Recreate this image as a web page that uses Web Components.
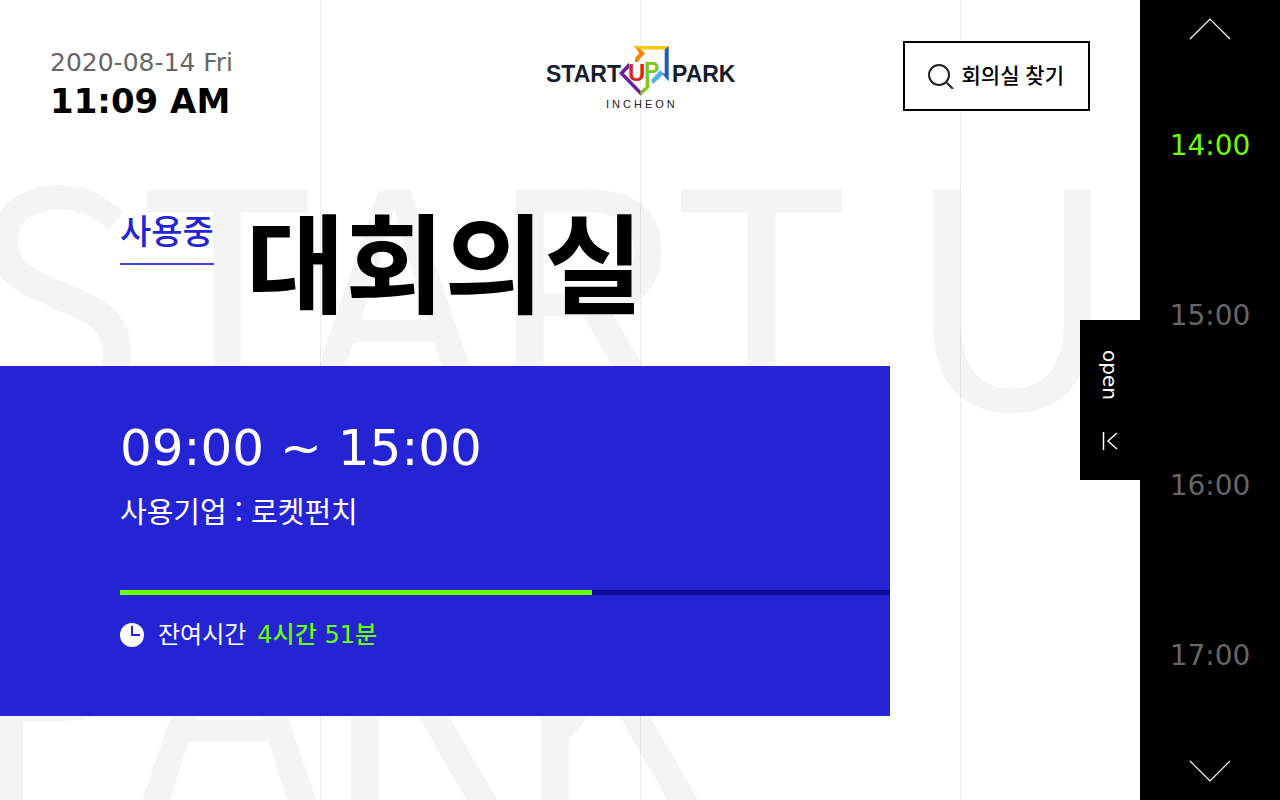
<!DOCTYPE html>
<html lang="ko">
<head>
<meta charset="utf-8">
<meta name="viewport" content="width=device-width, initial-scale=1">
<title>회의실 현황</title>
<style>
  html, body { margin: 0; min-height: 100%; }
  body {
    --blue: #2524d4;
    --lime: #6cff00;
    font-family: "DejaVu Sans", "Noto Sans CJK KR", sans-serif;
    color: #000;
    background: #fff;
  }
</style>
</head>
<body>
<room-app></room-app>
<script>
const define = (name, html) => {
  const template = document.createElement('template');
  template.innerHTML = html;
  customElements.define(name, class extends HTMLElement {
    constructor() {
      super();
      this.attachShadow({ mode: 'open' }).append(template.content.cloneNode(true));
    }
  });
};

define('page-backdrop', `
  <style>
    :host {
      display: block; position: absolute; inset: 0; z-index: -1; overflow: hidden;
      font: 400 300px/400px "Noto Sans CJK KR", sans-serif;
      color: #f4f4f4; white-space: nowrap;
    }
    .words { position: absolute; left: -35px; top: 78px; }
    .line { display: flex; gap: 52px; }
    .rules { position: absolute; inset: 0; display: grid; grid-template-columns: repeat(4, 1fr); }
    .rules i + i { border-left: 1px solid rgba(0, 0, 0, .08); }
  </style>
  <div class="words" aria-hidden="true">
    <div class="line"><span>START</span><span>UP</span></div>
    <div class="line"><span>PARK</span></div>
  </div>
  <div class="rules"><i></i><i></i><i></i><i></i></div>`);

define('date-clock', `
  <style>
    :host { display: block; }
    .date { font-size: 25px; line-height: 32px; color: #666; }
    .time { font-size: 34px; line-height: 44px; font-weight: 700; }
  </style>
  <div class="date"><slot name="date"></slot></div>
  <div class="time"><slot name="time"></slot></div>`);

define('park-logo', `
  <style>
    :host { display: block; }
    svg { display: block; overflow: visible; }
    text { font-family: "Liberation Sans", sans-serif; }
  </style>
  <svg width="188" height="68" viewBox="546 41 188 68" role="img" aria-label="Startup Park Incheon">
    <path d="M633 46h36l-4 3.500h-28z" fill="#ffc800"/>
    <path d="M668.700 46v35.500l-8.200-10 4.200 2.500V49.500z" fill="#1f5fae"/>
    <path d="M651 80l9.500-10 3 4.500-10.500 9.500z" fill="#55b4e6"/>
    <path d="M636 48l5 1.500 4 4-5 5-2 3.500h-3.200l.5-4.500 4-4z" fill="#ff7f00"/>
    <path d="M628.700 62.700L619 73.300l21.700 22.400v-5L623.900 73.300l5.500-5.500z" fill="#6a1f9c"/>
    <path d="M645.700 78h3.500v9.500l-8.500 8.200v-5l5-4.200z" fill="#7ec81e"/>
    <g font-weight="700" font-size="23" fill="#16202b">
      <text x="546" y="82">START</text>
      <text x="672" y="82">PARK</text>
    </g>
    <g font-weight="700">
      <text x="628" y="81" font-size="24" fill="#d8281e">U</text>
      <text x="644" y="79" font-size="23" fill="#7ec81e">P</text>
    </g>
    <text x="606" y="108" font-size="11" letter-spacing="3" fill="#222">INCHEON</text>
  </svg>`);

define('search-button', `
  <style>
    :host { display: block; }
    button {
      display: flex; align-items: center; gap: 8px; box-sizing: border-box; height: 70px;
      margin: 0; padding: 0 24px 0 23px; border: 2px solid #000; border-radius: 0; background: #fff;
      color: #000; font: 500 21px/32px "Noto Sans CJK KR", sans-serif; cursor: pointer;
    }
    span { padding-bottom: 4px; }
  </style>
  <button type="button">
    <svg width="26" height="26" viewBox="0 0 26 26" fill="none" stroke="#222" stroke-width="2" aria-hidden="true">
      <circle cx="11" cy="12" r="10"/><path d="M18 19l7 7"/>
    </svg>
    <span><slot></slot></span>
  </button>`);

define('room-title', `
  <style>
    :host { display: flex; align-items: flex-start; gap: 32px; padding-left: 120px; }
    .state {
      margin-top: 12px; padding-bottom: 9px; border-bottom: 2px solid #4443d8;
      color: var(--blue); font: 500 34px/48px "Noto Sans CJK KR", sans-serif;
    }
    h1 { margin: 0; font: 700 108px/128px "Noto Sans CJK KR", sans-serif; }
  </style>
  <div class="state"><slot name="state"></slot></div>
  <h1><slot></slot></h1>`);

define('booking-panel', `
  <style>
    :host {
      display: block; box-sizing: border-box; min-height: 350px; margin-right: 250px;
      padding: 50px 0 50px 120px; background: var(--blue); color: #fff;
    }
    .range { font-size: 50px; line-height: 64px; }
    .company { margin-top: 10px; font: 400 29px/40px "Noto Sans CJK KR", sans-serif; }
    progress {
      appearance: none; display: block; width: 100%; height: 5px; margin: 60px 0 24px;
      border: 0; background: #0d0c94;
    }
    progress::-webkit-progress-bar { background: #0d0c94; }
    progress::-webkit-progress-value { background: var(--lime); }
    .left { display: flex; align-items: center; font-size: 24px; line-height: 32px; }
    svg { margin-right: 14px; }
    label { margin-right: 11px; }
    .rest { color: var(--lime); font-weight: 500; }
  </style>
  <div class="range"><slot name="range"></slot></div>
  <div class="company"><slot name="company"></slot></div>
  <progress id="bar" max="1000" value="613"></progress>
  <div class="left">
    <svg width="24" height="24" viewBox="0 0 24 24" aria-hidden="true">
      <circle cx="12" cy="12" r="12" fill="#fff"/><path d="M12 3v9h8" fill="none" stroke="#2524d4" stroke-width="2"/>
    </svg>
    <label for="bar">잔여시간</label>
    <span class="rest"><slot name="rest"></slot></span>
  </div>`);

define('open-tab', `
  <style>
    :host { display: block; }
    button {
      display: flex; flex-direction: column; align-items: center; justify-content: space-between;
      box-sizing: border-box; width: 60px; height: 160px; margin: 0; padding: 30px 0;
      border: 0; background: #000; color: #fff; font: 20px/24px "DejaVu Sans", sans-serif; cursor: pointer;
    }
    span { writing-mode: vertical-rl; }
  </style>
  <button type="button">
    <span><slot></slot></span>
    <svg width="16" height="18" viewBox="0 0 16 18" fill="none" stroke="#fff" aria-hidden="true">
      <path d="M1.500 0v18" stroke-width="1.500"/><path d="M15 1L6 9l9 8" stroke-width="1.500"/>
    </svg>
  </button>`);

define('time-rail', `
  <style>
    :host { display: flex; flex-direction: column; position: relative; background: #000; }
    .arrow {
      display: grid; place-items: center; box-sizing: border-box; height: 59px; margin: 0; padding: 0;
      border: 0; background: none; cursor: pointer;
    }
    .up { padding-bottom: 2px; }
    ul { display: grid; grid-auto-rows: 1fr; flex: 1; margin: 0; padding: 2px 0 0; list-style: none; }
    open-tab { position: absolute; right: 100%; top: 50%; transform: translateY(-50%); }
  </style>
  <button class="arrow up" type="button" aria-label="이전 시간">
    <svg width="42" height="22" viewBox="0 0 42 22" fill="none" stroke="#fff" stroke-width="1.200"><path d="M1 21L21 1l20 20"/></svg>
  </button>
  <ul><slot></slot></ul>
  <button class="arrow" type="button" aria-label="다음 시간">
    <svg width="42" height="22" viewBox="0 0 42 22" fill="none" stroke="#fff" stroke-width="1.200"><path d="M1 1l20 20L41 1"/></svg>
  </button>
  <open-tab>open</open-tab>`);

define('time-slot', `
  <style>
    :host { display: grid; place-items: center; color: #666; font-size: 28px; line-height: 40px; }
    :host([current]) { color: var(--lime); }
    li { list-style: none; }
  </style>
  <li><slot></slot></li>`);

define('room-app', `
  <style>
    :host {
      display: grid; grid-template: auto auto 1fr / minmax(0, 1fr) 140px;
      position: relative; z-index: 0; min-height: 100vh; box-sizing: border-box;
    }
    header {
      grid-area: 1 / 1 / 2 / 3; display: grid; grid-template-columns: 1fr auto 1fr;
      align-items: start; padding: 41px 50px 71px;
    }
    date-clock { padding-top: 6px; }
    search-button { justify-self: end; margin-right: 140px; }
    room-title { grid-area: 2 / 1; }
    booking-panel { grid-area: 3 / 1; align-self: start; margin-top: 44px; }
    time-rail { grid-area: 1 / 2 / 4 / 3; }
  </style>
  <page-backdrop></page-backdrop>
  <header>
    <date-clock><span slot="date">2020-08-14 Fri</span><span slot="time">11:09 AM</span></date-clock>
    <park-logo></park-logo>
    <search-button>회의실 찾기</search-button>
  </header>
  <room-title><span slot="state">사용중</span>대회의실</room-title>
  <booking-panel>
    <span slot="range">09:00 ~ 15:00</span>
    <span slot="company">사용기업 : 로켓펀치</span>
    <span slot="rest">4시간 51분</span>
  </booking-panel>
  <time-rail>
    <time-slot current>14:00</time-slot>
    <time-slot>15:00</time-slot>
    <time-slot>16:00</time-slot>
    <time-slot>17:00</time-slot>
  </time-rail>`);
</script>
</body>
</html>
